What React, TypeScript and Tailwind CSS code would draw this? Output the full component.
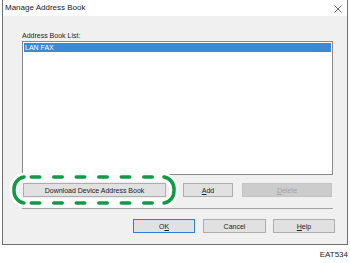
import React from "react";

const font = { fontFamily: '"Liberation Sans", Arial, sans-serif' };

// x centres of the straight dashes along the top and bottom of the callout
const dashCentres = [35.5, 58, 80.5, 103, 125.5, 148];

function Btn({
  label,
  className = "",
  disabled = false,
  primary = false,
}: {
  label: React.ReactNode;
  className?: string;
  disabled?: boolean;
  primary?: boolean;
}) {
  return (
    <div
      className={`flex h-[14px] items-center justify-center text-[7px] leading-none ${
        disabled
          ? "border border-[#c4c4c4] bg-[#cccccc] text-[#a3a3a3]"
          : primary
            ? "border-[1.5px] border-[#2a7fd4] bg-[#e1e1e1] text-[#222]"
            : "border border-[#adadad] bg-[#e1e1e1] text-[#222]"
      } ${className}`}
    >
      {label}
    </div>
  );
}

export default function App() {
  return (
    <div className="relative h-[263px] w-[350px] bg-white" style={font}>
      <div className="pl-[2px]">
        <div className="flex h-[245px] w-[346px] flex-col border border-t-0 border-[#6f6f6f]">
          {/* title bar */}
          <div className="flex h-[16px] items-center justify-between bg-white pl-[2px] pr-[5px]">
            <span className="text-[8px] leading-none text-[#1a1a1a]">Manage Address Book</span>
            <svg width="8" height="8" viewBox="0 0 8 8" className="mt-[1px]">
              <path d="M0.5 0.5 L7.5 7.5 M7.5 0.5 L0.5 7.5" stroke="#444" strokeWidth="0.8" />
            </svg>
          </div>

          {/* body */}
          <div className="flex-1 bg-[#f0f0f0] pl-[19px]">
            <div className="mt-[16px] text-[7px] leading-[8px] text-[#222]">Address Book List:</div>
            <div className="mt-[1px] h-[134px] w-[311px] border border-[#8a8a8a] bg-white p-px">
              <div className="flex h-[9px] items-center bg-[#3b8ad6] pl-[1px] text-[7px] leading-none text-white">
                LAN FAX
              </div>
            </div>

            <div className="mt-[8px] flex pl-px">
              <Btn label="Download Device Address Book" className="w-[143px]" />
              <Btn
                label={
                  <>
                    <span className="underline">A</span>dd
                  </>
                }
                className="ml-[17px] w-[50px]"
              />
              <Btn
                label={
                  <>
                    <span className="underline">D</span>elete
                  </>
                }
                disabled
                className="ml-[9px] w-[90px]"
              />
            </div>

            <div className="mt-[11px] h-px w-[311px] bg-[#a0a0a0]" />

            <div className="mt-[10px] flex pl-[111px]">
              <Btn
                label={
                  <>
                    O<span className="underline">K</span>
                  </>
                }
                primary
                className="w-[62px]"
              />
              <Btn label="Cancel" className="ml-[8px] w-[63px]" />
              <Btn
                label={
                  <>
                    <span className="underline">H</span>elp
                  </>
                }
                className="ml-[7px] w-[62px]"
              />
            </div>
          </div>
        </div>
      </div>

      <div className="flex justify-end pr-[2px] pt-[6px] text-[8px] leading-none text-[#222]">EAT534</div>

      {/* green callout annotation */}
      <svg className="pointer-events-none absolute left-0 top-0" width="350" height="263">
        <rect x="14" y="177" width="160" height="26" rx="12" fill="none" stroke="#fff" strokeWidth="9" />
        <g fill="none" stroke="#0f9a45" strokeWidth="3.5" strokeLinecap="round">
          <path d="M24 177 A12 12 0 0 0 14 189 L14 191 A12 12 0 0 0 24 203" />
          <path d="M164 177 A12 12 0 0 1 174 189 L174 191 A12 12 0 0 1 164 203" />
          {dashCentres.map((c) => (
            <React.Fragment key={c}>
              <line x1={c - 4.25} y1="177" x2={c + 4.25} y2="177" />
              <line x1={c - 4.25} y1="203" x2={c + 4.25} y2="203" />
            </React.Fragment>
          ))}
        </g>
      </svg>
    </div>
  );
}
